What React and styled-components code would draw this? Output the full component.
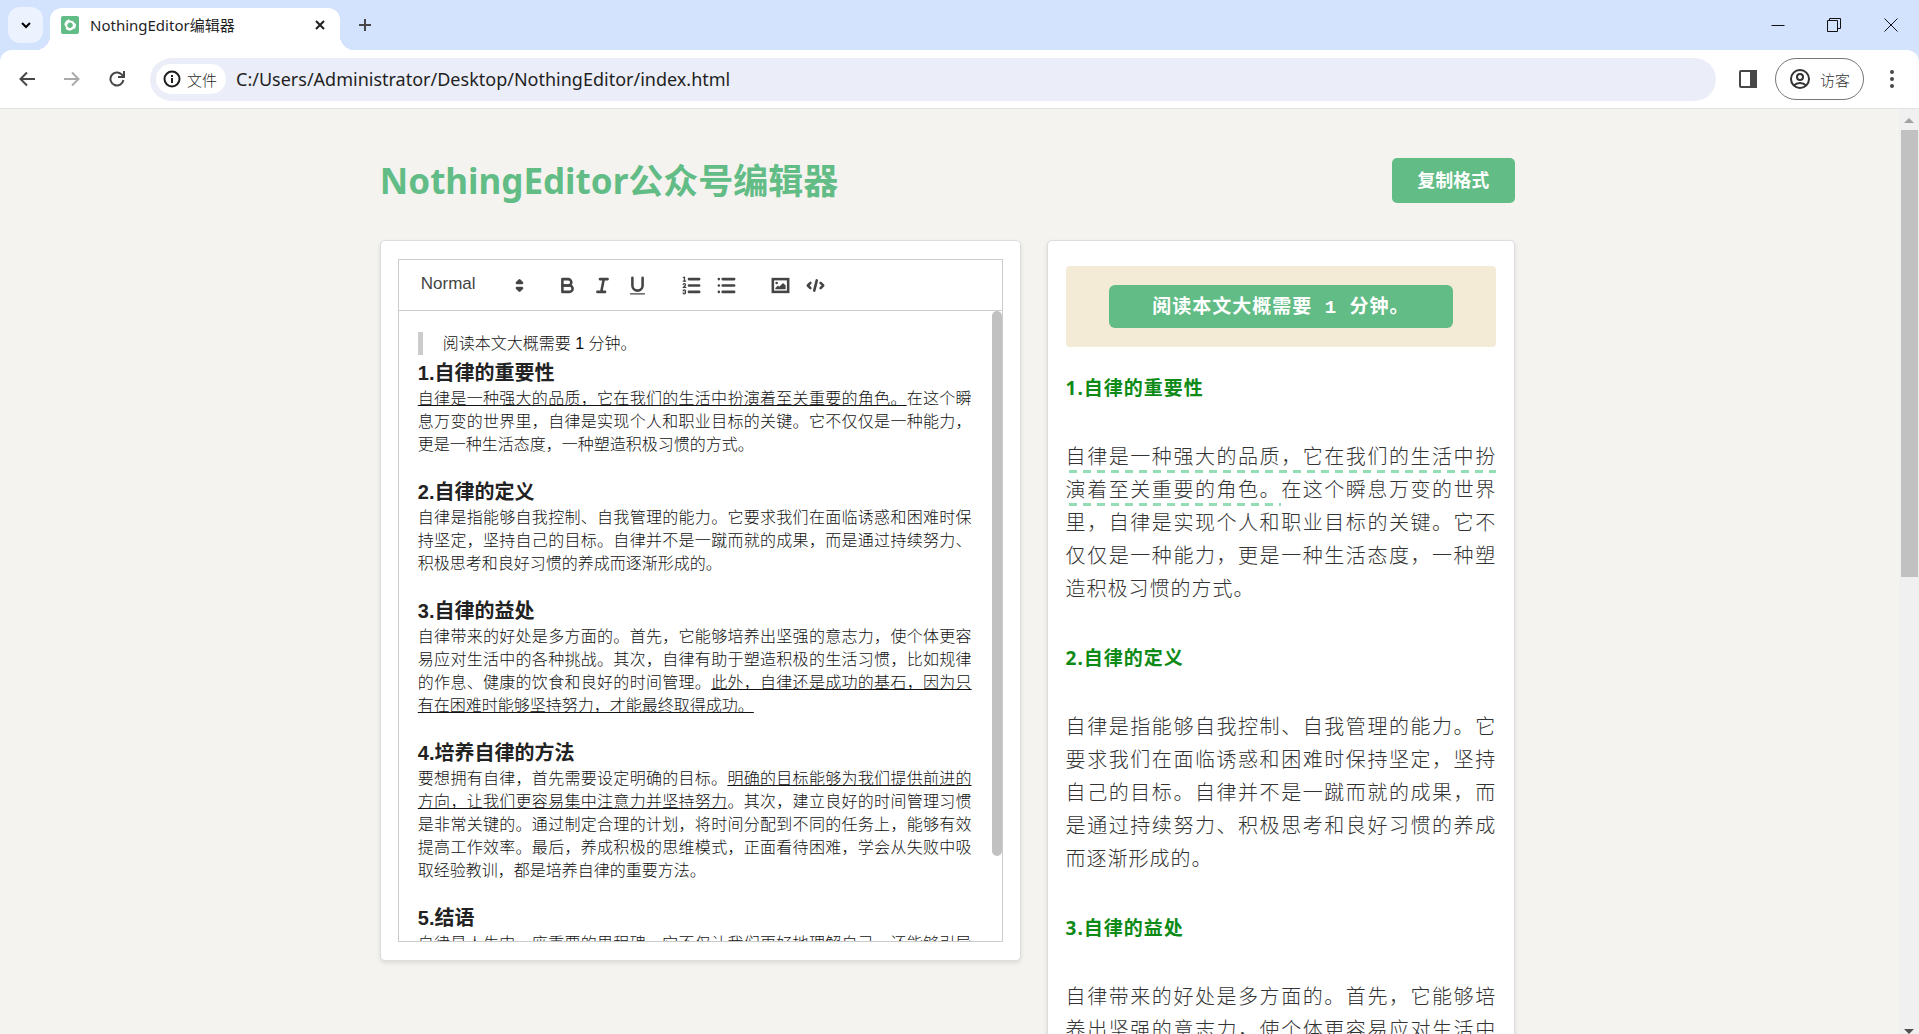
import React from 'react';
import styled, { createGlobalStyle } from 'styled-components';

const ui = `"Noto Sans", "Noto Sans CJK SC", sans-serif`;
const arial = `"Liberation Sans", "Noto Sans CJK SC", sans-serif`;
const green = '#62bc85';

const GlobalStyle = createGlobalStyle`
  *, *::before, *::after { box-sizing: border-box; }
  body { margin: 0; font-family: ${ui}; text-spacing-trim: space-all; }
  button, input, select { font: inherit; color: inherit; margin: 0; padding: 0; border: 0; background: none; outline: none; }
  h1, h2, h3, p, blockquote { margin: 0; }
  svg { display: block; }
`;

const Window = styled.div`
  display: flex;
  flex-direction: column;
  height: 100vh;
  overflow: hidden;
`;

/* ---------- browser frame ---------- */

const TabStrip = styled.div`
  display: flex;
  align-items: flex-end;
  flex: none;
  height: 50px;
  padding-left: 8px;
  background: #d3e3fd;
`;

const TabSearch = styled.button`
  display: grid;
  place-items: center;
  align-self: center;
  width: 35px;
  height: 36px;
  border-radius: 12px;
  background: #ecf2fe;
`;

const Tab = styled.div`
  position: relative;
  display: flex;
  align-items: center;
  gap: 11px;
  width: 290px;
  height: 42px;
  margin-left: 7px;
  padding: 0 12px 8px 11px;
  border-radius: 12px 12px 0 0;
  background: #fff;
  font-size: 15px;
  color: #1f1f1f;

  &::before, &::after {
    content: '';
    position: absolute;
    bottom: 0;
    width: 14px;
    height: 14px;
  }
  &::before { left: -14px; background: radial-gradient(circle at 0 0, transparent 14px, #fff 14px); }
  &::after { right: -14px; background: radial-gradient(circle at 100% 0, transparent 14px, #fff 14px); }
`;

const TabTitle = styled.span`
  flex: 1;
  line-height: 20px;
`;

const IconButton = styled.button`
  display: grid;
  place-items: center;
  width: ${(p) => p.$w || 45}px;
  height: ${(p) => p.$h || 42}px;
  color: ${(p) => p.$color || '#474747'};
`;

const TabClose = styled(IconButton)`
  width: 16px;
  height: 16px;
`;

const WindowControls = styled.div`
  display: flex;
  align-self: flex-start;
  margin-left: auto;
`;

const ToolbarBack = styled.div`
  flex: none;
  background: #d3e3fd;
`;

const Toolbar = styled.div`
  display: flex;
  align-items: center;
  height: 59px;
  padding: 0 5px 0 4px;
  border-bottom: 1px solid #e1e3e1;
  border-radius: 12px 12px 0 0;
  background: #fff;
`;

const Omnibox = styled.div`
  display: flex;
  align-items: center;
  gap: 10px;
  flex: 1;
  height: 43px;
  margin: 0 11px;
  padding: 0 6px;
  border-radius: 22px;
  background: #ebeef8;
`;

const SiteChip = styled.button`
  display: flex;
  align-items: center;
  gap: 6px;
  height: 30px;
  padding: 0 9px 0 7px;
  border-radius: 15px;
  background: #fff;
  font-size: 15px;
  font-weight: 300;
  color: #1f1f1f;
`;

const Address = styled.input`
  flex: 1;
  height: 30px;
  font-size: 18px;
  color: #1f1f1f;
`;

const Profile = styled.button`
  display: flex;
  align-items: center;
  gap: 9px;
  height: 42px;
  margin: 0 5px;
  padding: 0 13px;
  border: 1px solid #747775;
  border-radius: 21px;
  font-size: 15px;
  font-weight: 300;
  color: #333;
`;

/* ---------- page ---------- */

const Viewport = styled.div`
  display: flex;
  flex: 1;
  min-height: 0;
  background: #f5f3ef;
`;

const Page = styled.main`
  flex: 1;
  overflow: hidden;
`;

const Container = styled.div`
  width: 60%;
  margin: 0 auto;
  padding: 49px 4px 49px 0;
`;

const PageHeader = styled.header`
  display: flex;
  align-items: center;
  justify-content: space-between;
  height: 45px;
  margin-bottom: 37px;
`;

const Title = styled.h1`
  font-size: 35px;
  line-height: 45px;
  font-weight: 700;
  color: ${green};
`;

const CopyButton = styled.button`
  height: 45px;
  padding: 0 26px 3px 25px;
  border-radius: 5px;
  background: ${green};
  font-size: 18px;
  font-weight: 700;
  color: #fff;
`;

const Columns = styled.div`
  display: grid;
  grid-template-columns: 640fr 468fr;
  align-items: start;
  gap: 26px;
`;

const Panel = styled.section`
  padding: ${(p) => p.$pad};
  border: 1px solid #dcdddf;
  border-radius: 5px;
  background: #fff;
  box-shadow: 0 2px 4px rgba(0, 0, 0, 0.1);
`;

const Editor = styled.div`
  border: 1px solid #ccc;
`;

const EditorToolbar = styled.div`
  display: flex;
  align-items: center;
  gap: 19px;
  height: 51px;
  padding: 0 10px;
  border-bottom: 1px solid #ccc;
  color: #444;
`;

const Picker = styled.label`
  display: grid;
  align-items: center;
  width: 122px;
  height: 30px;

  & > * { grid-area: 1 / 1; }
  & > svg { justify-self: end; pointer-events: none; }
`;

const FormatSelect = styled.select`
  appearance: none;
  width: 100%;
  height: 30px;
  padding: 0 23px 3px 12px;
  font-family: ${arial};
  font-size: 17px;
`;

const Group = styled.div`
  display: flex;
`;

const Scroller = styled.div`
  display: flex;
  height: 630px;
  overflow: hidden;
`;

const Document = styled.div`
  flex: 1;
  padding: 15px 20px 15px 19px;
  font-family: ${arial};
  font-size: 16px;
  line-height: 23px;
  font-weight: 300;
  color: #111;
  text-align: justify;
`;

const Quote = styled.blockquote`
  margin: 6px 0 5px;
  padding-left: 20px;
  border-left: 5px solid #ccc;
`;

const DocHeading = styled.h3`
  font-size: 20px;
  line-height: 27px;
  font-weight: 700;
  color: #222;
`;

const DocText = styled.p`
  margin-bottom: 23px;
`;

const EditorThumb = styled.div`
  flex: none;
  width: 10px;
  height: 545px;
  border-radius: 5px;
  background: #c1c1c1;
`;

const Banner = styled.div`
  margin-bottom: 25px;
  padding: 19px 10%;
  border-radius: 4px;
  background: #f4ebd7;
`;

const BannerText = styled.p`
  padding-top: 3px;
  border-radius: 6px;
  background: ${green};
  font-family: "Liberation Mono", "Noto Sans CJK SC", monospace;
  font-size: 19px;
  line-height: 40px;
  font-weight: 700;
  letter-spacing: 1px;
  text-align: center;
  color: #fff;
`;

const PreviewHeading = styled.h2`
  margin-bottom: 35px;
  font-size: 19px;
  line-height: 33px;
  font-weight: 700;
  letter-spacing: 1px;
  color: #0e8a16;
`;

const PreviewText = styled.p`
  margin-bottom: 37px;
  font-size: 20px;
  line-height: 33px;
  font-weight: 300;
  letter-spacing: 1px;
  text-align: justify;
  color: #333;

  u {
    padding-bottom: 3px;
    text-decoration: none;
    background: repeating-linear-gradient(90deg, transparent 0 3px, #93deb5 3px 11px, transparent 11px 14px) 0 100% / 100% 3px no-repeat;
    box-decoration-break: clone;
    -webkit-box-decoration-break: clone;
  }
`;

const ScrollTrack = styled.div`
  display: flex;
  flex-direction: column;
  align-items: center;
  flex: none;
  width: 20px;
  padding: 9px 0 0;
  background: #f0f0f0;
`;

const ScrollThumb = styled.div`
  width: 17px;
  height: 447px;
  margin: 7px 0 auto;
  background: #c1c1c1;
`;

/* ---------- drawings ---------- */

const Favicon = () => (
  <svg width="18" height="18" viewBox="0 0 18 18">
    <rect width="18" height="18" rx="2" fill={green} />
    <g fill="none" stroke="#fff" strokeWidth="2">
      <path d="M5.4 8.6A3.8 3.8 0 0 1 12.6 7.6L14 10" />
      <path d="M10.6 5.7A3.8 3.8 0 0 1 11.2 12.3L8.4 14" />
      <path d="M12 11.6A3.8 3.8 0 0 1 5.4 10.2L4.4 7.4" />
      <path d="M4.2 9.4A5 5 0 0 1 8.4 4M14 7.6A5.2 5.2 0 0 1 12.6 12.8M8.8 14A5.2 5.2 0 0 1 5 12" strokeWidth="1.4" />
    </g>
  </svg>
);

const Line = ({ size = 16, d, w = 2, children }) => (
  <svg width={size} height={size} viewBox={`0 0 ${size} ${size}`} fill="none" stroke="currentColor" strokeWidth={w}>
    {d && <path d={d} />}
    {children}
  </svg>
);

const Quill = ({ children }) => (
  <svg width="23" height="23" viewBox="0 0 18 18" fill="none" stroke="#444" strokeWidth="2" strokeLinecap="round" strokeLinejoin="round">
    {children}
  </svg>
);

const icons = {
  Bold: (
    <Quill>
      <path d="M5,4H9.5A2.5,2.5,0,0,1,12,6.5v0A2.5,2.5,0,0,1,9.5,9H5V4Z" />
      <path d="M5,9h5.5A2.5,2.5,0,0,1,13,11.5v0A2.5,2.5,0,0,1,10.5,14H5V9Z" />
    </Quill>
  ),
  Italic: <Quill><path d="M7,4H13M5,14H11M8,14L10,4" /></Quill>,
  Underline: (
    <Quill>
      <path d="M5,3V9a4.012,4.012,0,0,0,4,4H9a4.012,4.012,0,0,0,4-4V3" />
      <rect x="3" y="15" width="12" height="1" rx="0.5" fill="#444" stroke="none" />
    </Quill>
  ),
  'Ordered list': (
    <Quill>
      <path d="M7,4H15M7,9H15M7,14H15" />
      <path strokeWidth="1" d="M2.5,5.5H4.5" />
      <path fill="#444" stroke="none" d="M3.5,6A0.5,0.5,0,0,1,3,5.5V3.085l-0.276.138A0.5,0.5,0,0,1,2.053,3c-0.124-.247-0.023-0.324.224-0.447l1-.5A0.5,0.5,0,0,1,4,2.5v3A0.5,0.5,0,0,1,3.5,6Z" />
      <path strokeWidth="1" d="M4.5,10.5h-2c0-.234,1.85-1.076,1.85-2.234A0.959,0.959,0,0,0,2.5,8.156" />
      <path strokeWidth="1" d="M2.5,14.846a0.959,0.959,0,0,0,1.85-.109A0.7,0.7,0,0,0,3.75,14a0.688,0.688,0,0,0,.6-0.736,0.959,0.959,0,0,0-1.85-.109" />
    </Quill>
  ),
  'Bullet list': <Quill><path d="M6,4H15M6,9H15M6,14H15M3,4H3M3,9H3M3,14H3" /></Quill>,
  Image: (
    <Quill>
      <rect x="3" y="4" width="12" height="10" strokeLinejoin="miter" />
      <circle cx="6" cy="7" r="1" fill="#444" stroke="none" />
      <polyline points="5 12 5 11 7 9 8 10 11 7 13 9 13 12 5 12" fill="#444" stroke="none" />
    </Quill>
  ),
  Code: <Quill><path d="M5,7L3,9L5,11M13,7L15,9L13,11M10,5L8,13" /></Quill>,
};

const Chevrons = () => (
  <Quill>
    <polygon points="7 11 9 13 11 11 7 11" />
    <polygon points="7 7 9 5 11 7 7 7" />
  </Quill>
);

const toolGroups = [['Bold', 'Italic', 'Underline'], ['Ordered list', 'Bullet list'], ['Image', 'Code']];

/* ---------- article ---------- */

const intro = '阅读本文大概需要 1 分钟。';

const sections = [
  {
    title: '1.自律的重要性',
    parts: [
      { u: true, t: '自律是一种强大的品质，它在我们的生活中扮演着至关重要的角色。' },
      { t: '在这个瞬息万变的世界里，自律是实现个人和职业目标的关键。它不仅仅是一种能力，更是一种生活态度，一种塑造积极习惯的方式。' },
    ],
  },
  {
    title: '2.自律的定义',
    parts: [
      { t: '自律是指能够自我控制、自我管理的能力。它要求我们在面临诱惑和困难时保持坚定，坚持自己的目标。自律并不是一蹴而就的成果，而是通过持续努力、积极思考和良好习惯的养成而逐渐形成的。' },
    ],
  },
  {
    title: '3.自律的益处',
    parts: [
      { t: '自律带来的好处是多方面的。首先，它能够培养出坚强的意志力，使个体更容易应对生活中的各种挑战。其次，自律有助于塑造积极的生活习惯，比如规律的作息、健康的饮食和良好的时间管理。' },
      { u: true, t: '此外，自律还是成功的基石，因为只有在困难时能够坚持努力，才能最终取得成功。' },
    ],
  },
  {
    title: '4.培养自律的方法',
    parts: [
      { t: '要想拥有自律，首先需要设定明确的目标。' },
      { u: true, t: '明确的目标能够为我们提供前进的方向，让我们更容易集中注意力并坚持努力' },
      { t: '。其次，建立良好的时间管理习惯是非常关键的。通过制定合理的计划，将时间分配到不同的任务上，能够有效提高工作效率。最后，养成积极的思维模式，正面看待困难，学会从失败中吸取经验教训，都是培养自律的重要方法。' },
    ],
  },
  {
    title: '5.结语',
    parts: [{ t: '自律是人生中一座重要的里程碑，它不仅让我们更好地理解自己，还能够引导我们走向成功。' }],
  },
];

const renderParts = (parts) => parts.map((p, i) => (p.u ? <u key={i}>{p.t}</u> : <React.Fragment key={i}>{p.t}</React.Fragment>));

export default function App() {
  return (
    <Window>
      <GlobalStyle />
      <TabStrip>
        <TabSearch aria-label="Search tabs">
          <Line size={12} d="M2 4L6 8L10 4" />
        </TabSearch>
        <Tab>
          <Favicon />
          <TabTitle>NothingEditor编辑器</TabTitle>
          <TabClose aria-label="Close tab" $color="#1f1f1f">
            <Line size={12} d="M2 2L10 10M10 2L2 10" />
          </TabClose>
        </Tab>
        <IconButton aria-label="New tab" $w={50} $h={50}>
          <Line size={14} d="M7 1V13M1 7H13" />
        </IconButton>
        <WindowControls>
          <IconButton aria-label="Minimize" $w={57} $h={49} $color="#111"><Line size={14} w={1} d="M0.5 7.5H13.5" /></IconButton>
          <IconButton aria-label="Restore" $w={56} $h={49} $color="#111">
            <Line size={14} w={1} d="M0.5 2.5H10.5V13.5H0.5ZM2.5 2V0.5H13.5V10.5H11" />
          </IconButton>
          <IconButton aria-label="Close" $w={57} $h={49} $color="#111"><Line size={14} w={1} d="M0.5 0.5L13.5 13.5M13.5 0.5L0.5 13.5" /></IconButton>
        </WindowControls>
      </TabStrip>
      <ToolbarBack>
        <Toolbar>
          <IconButton aria-label="Back"><Line d="M16 8H2M8 1.5L1.5 8L8 14.5" /></IconButton>
          <IconButton aria-label="Forward" $color="#aaa"><Line d="M0 8H14M8 1.5L14.5 8L8 14.5" /></IconButton>
          <IconButton aria-label="Reload"><Line d="M14.4 9A6.5 6.5 0 1 1 12.6 3.4L14 5M15 0V6H9" /></IconButton>
          <Omnibox>
            <SiteChip>
              <Line size={18}>
                <circle cx="9" cy="9" r="7.5" />
                <path d="M9 8V13M9 5V7" />
              </Line>
              文件
            </SiteChip>
            <Address aria-label="Address" defaultValue="C:/Users/Administrator/Desktop/NothingEditor/index.html" />
          </Omnibox>
          <IconButton aria-label="Side panel" $w={43}>
            <Line size={18}>
              <rect x="1" y="1" width="16" height="16" rx="1" />
              <rect x="12" y="1" width="5" height="16" fill="currentColor" />
            </Line>
          </IconButton>
          <Profile>
            <Line size={22}>
              <circle cx="11" cy="11" r="9" />
              <circle cx="11" cy="9" r="3" />
              <path d="M5 17.5C8 14.2 14 14.2 17 17.5" />
            </Line>
            访客
          </Profile>
          <IconButton aria-label="Menu">
            <svg width="4" height="18" viewBox="0 0 4 18" fill="currentColor">
              <circle cx="2" cy="2" r="2" />
              <circle cx="2" cy="9" r="2" />
              <circle cx="2" cy="16" r="2" />
            </svg>
          </IconButton>
        </Toolbar>
      </ToolbarBack>
      <Viewport>
        <Page>
          <Container>
            <PageHeader>
              <Title>NothingEditor公众号编辑器</Title>
              <CopyButton>复制格式</CopyButton>
            </PageHeader>
            <Columns>
              <Panel $pad="18px 17px">
                <Editor>
                  <EditorToolbar>
                    <Picker>
                      <FormatSelect aria-label="Text style" defaultValue="Normal">
                        <option>Normal</option>
                      </FormatSelect>
                      <Chevrons />
                    </Picker>
                    {toolGroups.map((group) => (
                      <Group key={group[0]}>
                        {group.map((name) => (
                          <IconButton key={name} aria-label={name} $w={35} $h={30}>{icons[name]}</IconButton>
                        ))}
                      </Group>
                    ))}
                  </EditorToolbar>
                  <Scroller>
                    <Document>
                      <Quote>{intro}</Quote>
                      {sections.map((s) => (
                        <React.Fragment key={s.title}>
                          <DocHeading>{s.title}</DocHeading>
                          <DocText>{renderParts(s.parts)}</DocText>
                        </React.Fragment>
                      ))}
                    </Document>
                    <EditorThumb />
                  </Scroller>
                </Editor>
              </Panel>
              <Panel $pad="25px 18px">
                <Banner>
                  <BannerText>{intro}</BannerText>
                </Banner>
                {sections.map((s) => (
                  <React.Fragment key={s.title}>
                    <PreviewHeading>{s.title}</PreviewHeading>
                    <PreviewText>{renderParts(s.parts)}</PreviewText>
                  </React.Fragment>
                ))}
              </Panel>
            </Columns>
          </Container>
        </Page>
        <ScrollTrack>
          <svg width="10" height="5" viewBox="0 0 10 5" fill="#a3a3a3"><path d="M0 5L5 0L10 5Z" /></svg>
          <ScrollThumb />
          <svg width="10" height="5" viewBox="0 0 10 5" fill="#505050"><path d="M0 0H10L5 5Z" /></svg>
        </ScrollTrack>
      </Viewport>
    </Window>
  );
}
